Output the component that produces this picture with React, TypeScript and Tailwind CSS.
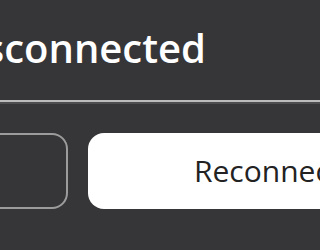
export default function App() {
  return (
    <div className="w-screen h-screen bg-[#363638] overflow-hidden" style={{ fontFamily: '"Open Sans", "Noto Sans", sans-serif' }}>
      <div className="flex flex-col">
        <div className="mt-[28px] w-[206px] flex justify-end">
          <span className="h-[40px] leading-[40px] text-[40px] font-semibold text-white whitespace-nowrap shrink-0">
            Disconnected
          </span>
        </div>
        <div className="mt-[32px] h-[2px] w-full bg-[#bcbcbc]" />
        <div className="h-[2px] w-full bg-[#4d4d4f]" />
        <div className="mt-[29px] flex gap-[20px]">
          <div className="w-[68px] shrink-0 flex justify-end">
            <button className="w-[200px] h-[76px] shrink-0 rounded-[16px] border-2 border-[#9c9c9c] bg-transparent" />
          </div>
          <button className="w-[320px] h-[76px] shrink-0 rounded-[16px] bg-white flex items-center justify-start pl-[106px] text-[30px] leading-[30px] text-[#222222] whitespace-nowrap">
            Reconnect
          </button>
        </div>
      </div>
    </div>
  );
}
